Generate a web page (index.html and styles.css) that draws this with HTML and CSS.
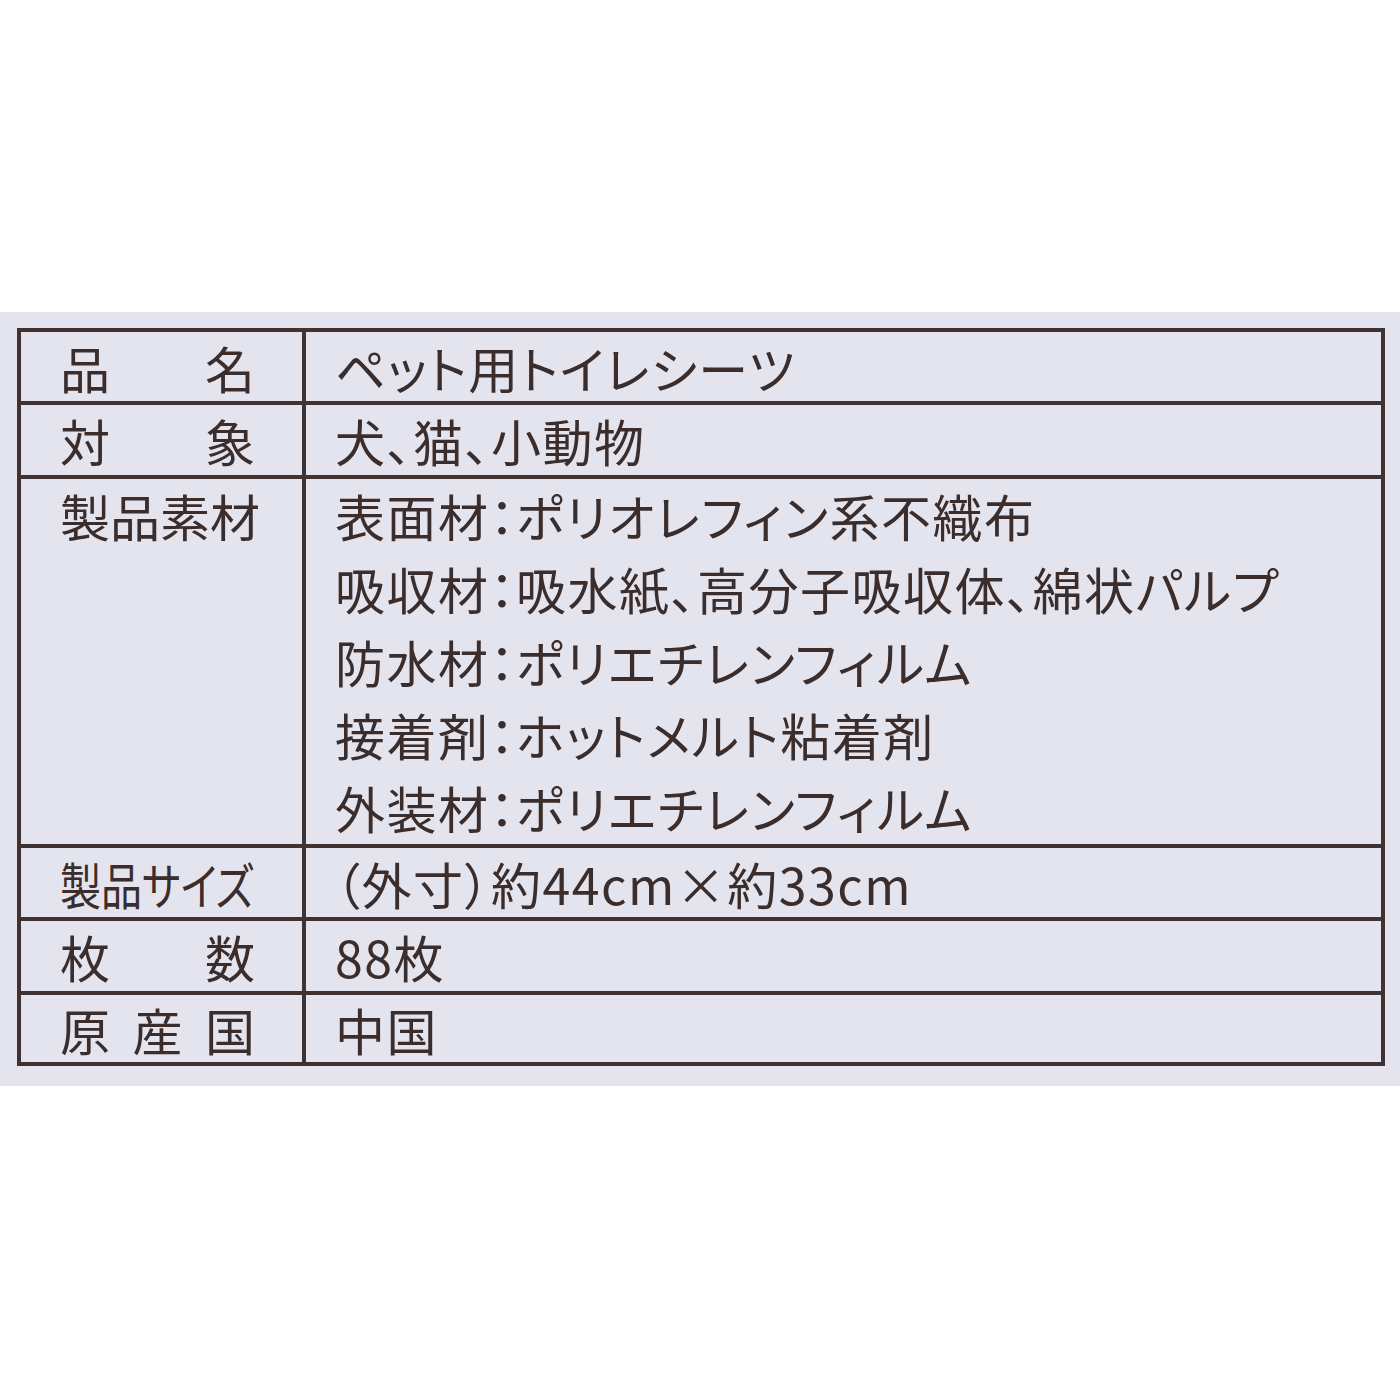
FILE: index.html
```html
<!DOCTYPE html>
<html lang="ja">
<head>
<meta charset="utf-8">
<title>ペット用トイレシーツ</title>
<link rel="stylesheet" href="styles.css">
</head>
<body>
<div class="panel">
  <div class="table">
    <div class="row r1">
      <div class="label"><span class="just"><span>品</span><span>名</span></span></div>
      <div class="value">ペット用トイレシーツ</div>
    </div>
    <div class="row r2">
      <div class="label"><span class="just"><span>対</span><span>象</span></span></div>
      <div class="value">犬、猫、小動物</div>
    </div>
    <div class="row r3">
      <div class="label"><span class="just"><span>製</span><span>品</span><span>素</span><span>材</span></span></div>
      <div class="value multi">
        <div>表面材：ポリオレフィン系不織布</div>
        <div>吸収材：吸水紙、高分子吸収体、綿状パルプ</div>
        <div>防水材：ポリエチレンフィルム</div>
        <div>接着剤：ホットメルト粘着剤</div>
        <div>外装材：ポリエチレンフィルム</div>
      </div>
    </div>
    <div class="row r4">
      <div class="label"><span class="squeeze">製品サイズ</span></div>
      <div class="value">（外寸）約44cm×約33cm</div>
    </div>
    <div class="row r5">
      <div class="label"><span class="just"><span>枚</span><span>数</span></span></div>
      <div class="value">88枚</div>
    </div>
    <div class="row r6">
      <div class="label"><span class="just"><span>原</span><span>産</span><span>国</span></span></div>
      <div class="value">中国</div>
    </div>
  </div>
</div>
</body>
</html>
```
FILE: styles.css
```css
html, body {
  margin: 0;
  padding: 0;
  background: #ffffff;
}
body {
  width: 1400px;
  height: 1400px;
  font-family: "Noto Sans CJK JP", "Noto Sans", sans-serif;
  color: #3a2d2b;
}
.panel {
  margin-top: 312px;
  height: 774px;
  background: #e4e4ee;
  padding: 16px 0 0 17px;
  box-sizing: border-box;
}
.table {
  width: 1368px;
  border: 4px solid #3f3230;
  box-sizing: border-box;
}
.row {
  display: grid;
  grid-template-columns: 285px 1fr;
  border-top: 4px solid #3f3230;
}
.row.r1 { border-top: none; }
.label {
  border-right: 4px solid #3f3230;
  padding-left: 39px;
  font-size: 50px;
  display: flex;
  align-items: center;
}
.r3 .label { align-items: flex-start; line-height: 73px; }
.just {
  width: 195px;
  display: flex;
  justify-content: space-between;
}
.squeeze {
  display: inline-block;
  white-space: nowrap;
  transform: scaleX(0.82);
  transform-origin: left center;
  font-feature-settings: "palt";
}
.value {
  padding-left: 29px;
  font-size: 50px;
  font-feature-settings: "palt";
  letter-spacing: 1.5px;
  white-space: nowrap;
  display: flex;
  align-items: center;
}
.value.multi {
  display: block;
  line-height: 73px;
}
.r1 { height: 69px; }
.r2 { height: 70px; }
.r3 { height: 365px; }
.r4 { height: 69px; }
.r5 { height: 70px; }
.r6 { height: 67px; }
.r1 .label, .r2 .label, .r4 .label, .r5 .label, .r6 .label,
.r1 .value, .r2 .value, .r4 .value, .r5 .value, .r6 .value {
  line-height: 1;
}
```
